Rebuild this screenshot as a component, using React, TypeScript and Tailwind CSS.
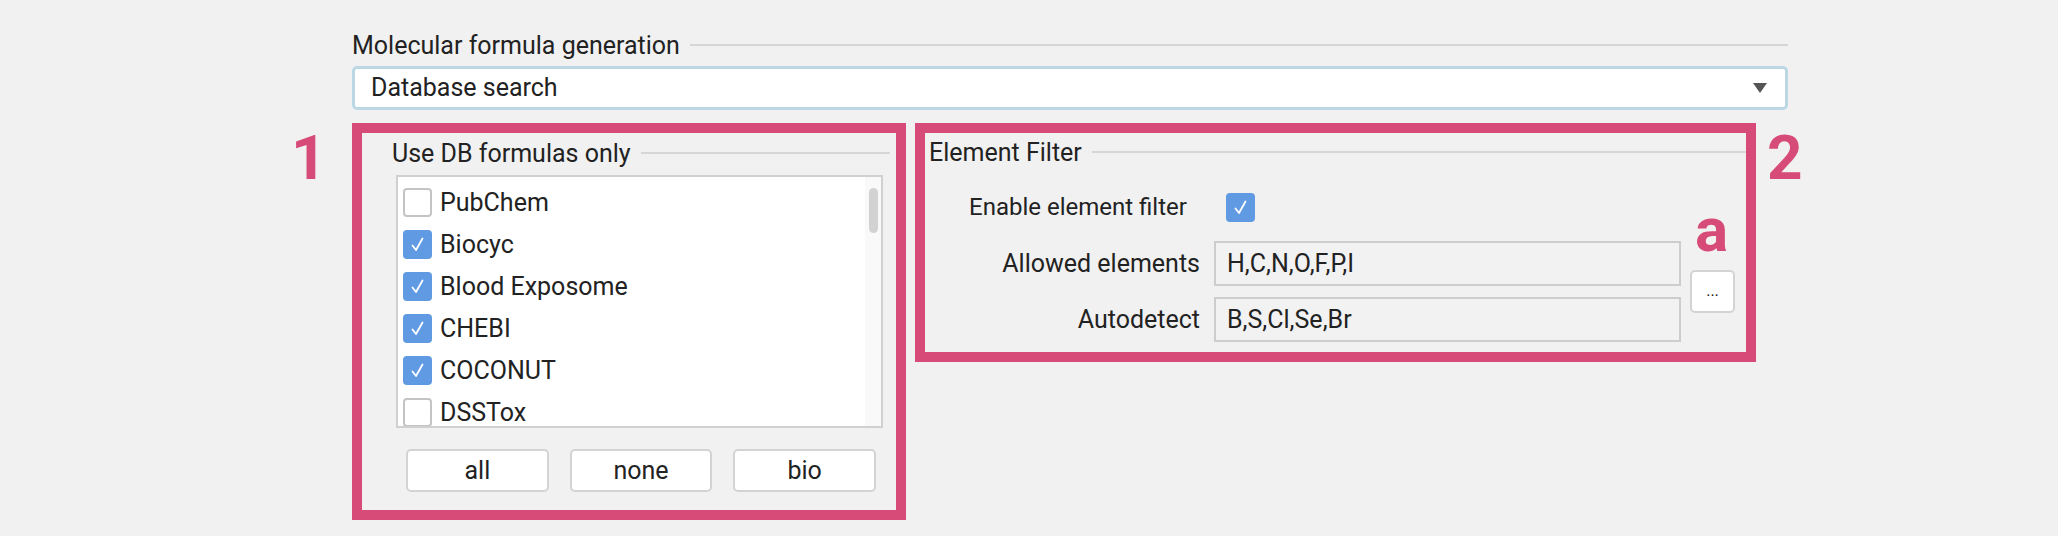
import React from 'react'

const font = { fontFamily: 'Roboto, "Liberation Sans", sans-serif' }

const databases = [
  { name: 'PubChem', checked: false },
  { name: 'Biocyc', checked: true },
  { name: 'Blood Exposome', checked: true },
  { name: 'CHEBI', checked: true },
  { name: 'COCONUT', checked: true },
  { name: 'DSSTox', checked: false },
]

function CheckBox({ checked }: { checked: boolean }) {
  if (!checked) {
    return <div className="w-[29px] h-[29px] shrink-0 rounded-[4px] border-2 border-[#c4c4c4] bg-white" />
  }
  return (
    <div className="w-[29px] h-[29px] shrink-0 rounded-[4px] bg-[#5f9ae3] flex items-center justify-center">
      <svg width="17" height="17" viewBox="0 0 17 17" fill="none">
        <path d="M3.5 9.5 L7 14 L13.5 2.5" stroke="white" strokeWidth="1.8" strokeLinecap="round" strokeLinejoin="round" />
      </svg>
    </div>
  )
}

function GroupTitle({ title, className }: { title: string; className?: string }) {
  return (
    <div className={`flex items-center h-[24px] ${className ?? ''}`}>
      <span className="text-[25px] leading-none text-[#222] whitespace-nowrap">{title}</span>
      <div className="flex-1 h-[2px] bg-[#d6d6d6] ml-[10px]" />
    </div>
  )
}

function Button({ label, className }: { label: string; className?: string }) {
  return (
    <div
      className={`h-[43px] bg-white border-2 border-[#d3d3d3] rounded-[5px] flex items-center justify-center text-[25px] text-[#222] ${className ?? ''}`}
    >
      {label}
    </div>
  )
}

function Field({ value }: { value: string }) {
  return (
    <div className="w-[467px] h-[45px] border-2 border-[#cdcdcd] bg-[#f2f2f2] flex items-center pl-[11px] text-[25px] text-[#222]">
      {value}
    </div>
  )
}

export default function App() {
  return (
    <div className="relative w-[2058px] h-[536px] bg-[#f1f1f1] overflow-hidden" style={font}>
      {/* annotations */}
      <div className="absolute left-[291px] top-[127px] text-[62px] leading-none font-bold text-[#d64b78]">1</div>
      <div className="absolute left-[1767px] top-[127px] text-[62px] leading-none font-bold text-[#d64b78]">2</div>
      <div className="absolute left-[1695px] top-[199px] text-[62px] leading-none font-bold text-[#d64b78]">a</div>

      <div className="ml-[352px] w-[1436px] pt-[33px]">
        {/* Molecular formula generation */}
        <GroupTitle title="Molecular formula generation" />
        <div className="mt-[9px] h-[44px] rounded-[5px] border-[3px] border-[#bcd8e5] bg-white flex items-center pl-[16px] pr-[18px]">
          <span className="flex-1 text-[25px] text-[#222]">Database search</span>
          <svg width="14" height="10" viewBox="0 0 14 10">
            <path d="M0 0 L14 0 L7 10 Z" fill="#555" />
          </svg>
        </div>

        <div className="flex items-start gap-[9px] mt-[13px]">
          {/* Use DB formulas only */}
          <div className="w-[554px] h-[397px] border-[10px] border-[#d64b78]">
            <div className="pl-[30px] pr-[6px] pt-[8px]">
              <GroupTitle title="Use DB formulas only" />
              <div className="ml-[4px] mr-[7px] mt-[10px] h-[253px] border-2 border-[#d0d0d0] bg-white flex overflow-hidden">
                <div className="flex-1 pl-[5px] pt-[11px] flex flex-col gap-[13px]">
                  {databases.map(db => (
                    <div key={db.name} className="flex items-center gap-[8px] h-[29px]">
                      <CheckBox checked={db.checked} />
                      <span className="text-[25px] text-[#222] leading-none">{db.name}</span>
                    </div>
                  ))}
                </div>
                <div className="w-[16px] bg-[#f9f9f9] pt-[11px] flex justify-center">
                  <div className="w-[9px] h-[45px] rounded-full bg-[#d2d2d2]" />
                </div>
              </div>
              <div className="mx-[14px] mt-[21px] flex gap-[21px]">
                <Button label="all" className="flex-1" />
                <Button label="none" className="flex-1" />
                <Button label="bio" className="flex-1" />
              </div>
            </div>
          </div>

          {/* Element Filter */}
          <div className="w-[841px] h-[239px] border-[10px] border-[#d64b78]">
            <div className="pl-[4px] pt-[7px]">
              <GroupTitle title="Element Filter" />
              <div className="pl-[40px] mt-[28px] flex items-center h-[30px]">
                <span className="w-[257px] text-[24px] text-[#222] whitespace-nowrap">Enable element filter</span>
                <CheckBox checked />
              </div>
              <div className="pl-[40px] mt-[19px] flex items-center">
                <div className="flex flex-col gap-[11px]">
                  <div className="flex items-center">
                    <span className="w-[231px] text-right text-[25px] text-[#222]">Allowed elements</span>
                    <div className="ml-[14px]">
                      <Field value="H,C,N,O,F,P,I" />
                    </div>
                  </div>
                  <div className="flex items-center">
                    <span className="w-[231px] text-right text-[25px] text-[#222]">Autodetect</span>
                    <div className="ml-[14px]">
                      <Field value="B,S,Cl,Se,Br" />
                    </div>
                  </div>
                </div>
                <div className="ml-[9px] w-[45px] h-[43px] bg-white border-2 border-[#d3d3d3] rounded-[5px] flex items-center justify-center text-[16px] text-[#222] pb-[2px]">
                  ...
                </div>
              </div>
            </div>
          </div>
        </div>
      </div>
    </div>
  )
}
